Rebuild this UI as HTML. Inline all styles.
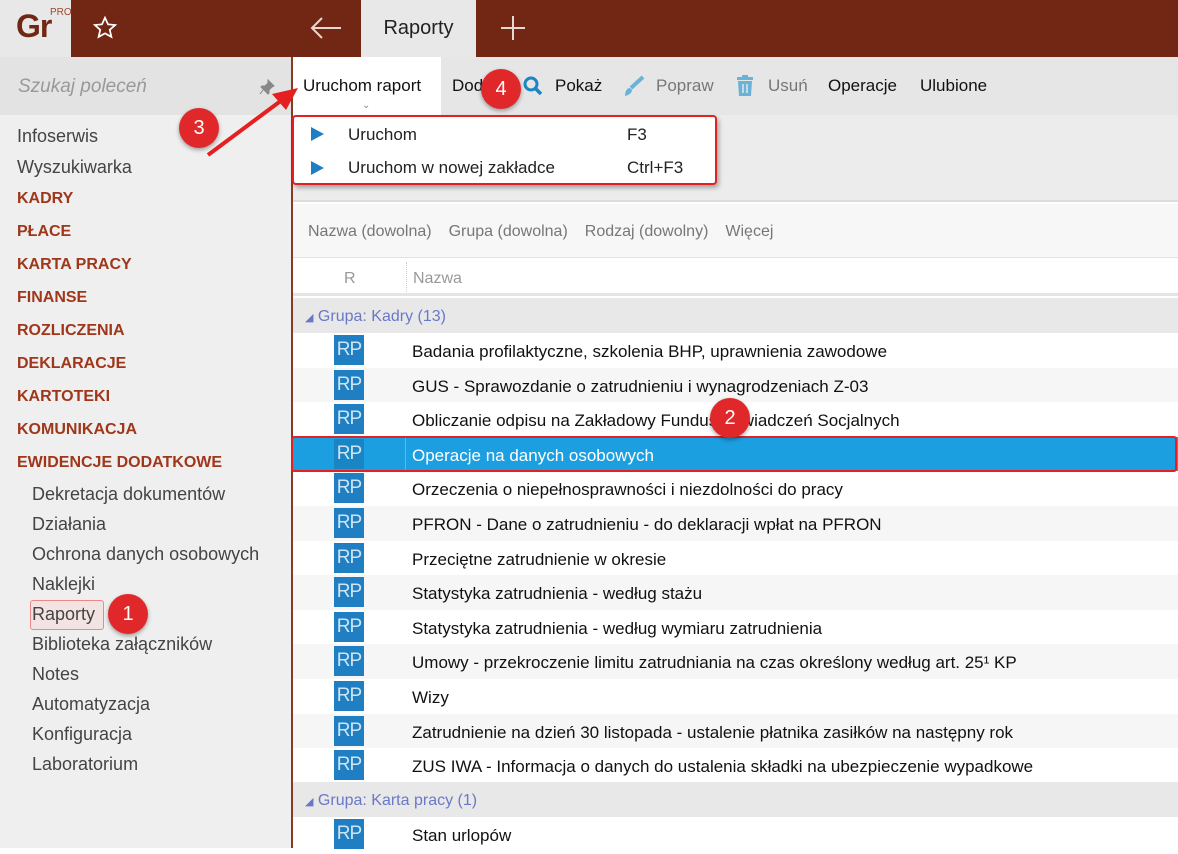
<!DOCTYPE html>
<html><head><meta charset="utf-8"><style>
*{margin:0;padding:0;box-sizing:border-box}
body{width:1178px;height:848px;overflow:hidden;font-family:"Segoe UI","Liberation Sans",sans-serif;background:#fff;position:relative;font-size:17px;color:#222}
.abs{position:absolute}
.top{left:0;top:0;width:1178px;height:57px;background:#722714}
.logo{left:0;top:0;width:71px;height:57px;background:#e8e8e8}
.tab{left:361px;top:0;width:115px;height:57px;background:#e8e8e8;font-size:20px;line-height:57px;text-align:center;color:#222}
.side{left:0;top:57px;width:291px;height:791px;background:#efefef}
.search{left:0;top:57px;width:291px;height:58px;background:#e3e3e3;color:#999;font-style:italic;font-size:19px;padding:19px 0 0 18px}
.vline{left:291px;top:57px;width:2px;height:791px;background:#8a3a22}
.si{position:absolute;font-size:18px;color:#444;white-space:nowrap}
.cap{color:#a0361a;font-weight:bold;font-size:16px;left:17px}
.sub{left:32px}
.tb{left:293px;top:57px;width:885px;height:58px;background:#e6e6e6}
.tbi{position:absolute;top:76px;font-size:17px;color:#111}
.gr{color:#777}
.area{left:293px;top:115px;width:885px;height:87px;background:#ececec;border-bottom:2px solid #dcdcdc}
.filt{left:293px;top:204px;width:885px;height:54px;background:#f7f7f7;color:#777;font-size:16px;line-height:56px;border-bottom:1px solid #e3e3e3}
.hdr{left:293px;top:258px;width:885px;height:38px;background:#fff;border-bottom:3px solid #e4e4e4;color:#999;font-size:16px}
.grp{position:absolute;left:293px;width:885px;height:35px;background:#e8e8e8;color:#6a78c8;font-size:16px;line-height:37px;padding-left:12px}
.row{position:absolute;left:293px;width:885px;height:34.6px;font-size:17px;line-height:37px;color:#111}
.rp{position:absolute;left:41px;top:2px;width:30px;height:30px;background:#1f7fc2;color:#cfe4f2;font-size:19px;line-height:30px;text-align:center;letter-spacing:-1px}
.rt{position:absolute;left:119px;top:0;white-space:nowrap}
.badge{position:absolute;width:40px;height:40px;border-radius:50%;background:#e0282a;color:#fff;font-size:20px;text-align:center;line-height:40px;box-shadow:0 2px 4px rgba(0,0,0,.35)}
</style></head><body>
<div class="abs top"></div>
<div class="abs logo"><span class="abs" style="left:16px;top:8px;font-size:32px;color:#722714;font-weight:bold;letter-spacing:-1px">Gr</span><span class="abs" style="left:50px;top:7px;font-size:10px;color:#9a4a30">PRO</span></div>
<svg class="abs" style="left:92px;top:15px" width="26" height="26" viewBox="0 0 24 24"><path d="M12 2.5l2.8 6.1 6.6.7-5 4.4 1.5 6.5L12 16.9 6.1 20.2l1.5-6.5-5-4.4 6.6-.7z" fill="none" stroke="#fff" stroke-width="1.6"/></svg>
<svg class="abs" style="left:309px;top:15px" width="34" height="26" viewBox="0 0 34 26"><path d="M32 13H3M13 3L3 13l10 10" fill="none" stroke="#e8d8d0" stroke-width="2"/></svg>
<div class="abs tab">Raporty</div>
<svg class="abs" style="left:500px;top:15px" width="26" height="26"><path d="M13 1v24M1 13h24" stroke="#e8d8d0" stroke-width="2"/></svg>

<div class="abs side"></div>
<div class="abs search">Szukaj poleceń</div>
<svg class="abs" style="left:258px;top:78px" width="18" height="18" viewBox="0 0 18 18"><path d="M10 2l6 6-2 1-3 3 0 3-1 1-7-7 1-1h3l3-3z M5 12l-3 4" fill="#888" stroke="#888"/></svg>
<div class="si" style="left:17px;top:126px">Infoserwis</div>
<div class="si" style="left:17px;top:157px">Wyszukiwarka</div>
<div class="si cap" style="top:190px">KADRY</div>
<div class="si cap" style="top:223px">PŁACE</div>
<div class="si cap" style="top:256px">KARTA PRACY</div>
<div class="si cap" style="top:289px">FINANSE</div>
<div class="si cap" style="top:322px">ROZLICZENIA</div>
<div class="si cap" style="top:355px">DEKLARACJE</div>
<div class="si cap" style="top:388px">KARTOTEKI</div>
<div class="si cap" style="top:421px">KOMUNIKACJA</div>
<div class="si cap" style="top:454px">EWIDENCJE DODATKOWE</div>
<div class="si sub" style="top:484px">Dekretacja dokumentów</div>
<div class="si sub" style="top:514px">Działania</div>
<div class="si sub" style="top:544px">Ochrona danych osobowych</div>
<div class="si sub" style="top:574px">Naklejki</div>
<div class="abs" style="left:30px;top:600px;width:74px;height:30px;border:1px solid #e88;border-radius:3px;background:#f3e3e3"></div>
<div class="si sub" style="top:604px">Raporty</div>
<div class="si sub" style="top:634px">Biblioteka załączników</div>
<div class="si sub" style="top:664px">Notes</div>
<div class="si sub" style="top:694px">Automatyzacja</div>
<div class="si sub" style="top:724px">Konfiguracja</div>
<div class="si sub" style="top:754px">Laboratorium</div>
<div class="abs vline"></div>

<div class="abs tb"></div>
<div class="abs" style="left:293px;top:57px;width:148px;height:58px;background:#fff"></div>
<div class="tbi" style="left:303px">Uruchom raport</div>
<div class="abs" style="left:362px;top:100px;font-size:10px;color:#888">⌄</div>
<div class="tbi" style="left:452px">Dodaj</div>
<svg class="abs" style="left:522px;top:75px" width="22" height="22"><circle cx="9" cy="9" r="6" fill="none" stroke="#1a86c8" stroke-width="3"/><path d="M13 13l6 6" stroke="#1a86c8" stroke-width="3.5"/></svg>
<div class="tbi" style="left:555px">Pokaż</div>
<svg class="abs" style="left:621px;top:75px" width="24" height="22"><path d="M22 2L10 13" stroke="#6ab3d8" stroke-width="4"/><path d="M9 13c-3 0-5 3-5 8 4-1 7-3 7-6z" fill="#6ab3d8"/></svg>
<div class="tbi gr" style="left:656px">Popraw</div>
<svg class="abs" style="left:736px;top:75px" width="18" height="22"><rect x="1" y="2" width="16" height="3" fill="#6ab3d8"/><rect x="6" y="0" width="6" height="3" fill="#6ab3d8"/><path d="M2 6h14l-1 15H3z" fill="#6ab3d8"/><path d="M7 9v9M11 9v9" stroke="#e6e6e6" stroke-width="1.5"/></svg>
<div class="tbi gr" style="left:768px">Usuń</div>
<div class="tbi" style="left:828px">Operacje</div>
<div class="tbi" style="left:920px">Ulubione</div>

<div class="abs area"></div>
<div class="abs" style="left:292px;top:115px;width:425px;height:70px;background:#fff;border:2px solid #e52020;border-radius:4px;box-shadow:2px 3px 5px rgba(0,0,0,.3)"></div>
<div class="abs" style="left:311px;top:127px;width:0;height:0;border-left:13px solid #1f7fc2;border-top:7px solid transparent;border-bottom:7px solid transparent"></div>
<div class="abs" style="left:311px;top:161px;width:0;height:0;border-left:13px solid #1f7fc2;border-top:7px solid transparent;border-bottom:7px solid transparent"></div>
<div class="abs" style="left:348px;top:125px">Uruchom</div>
<div class="abs" style="left:627px;top:125px">F3</div>
<div class="abs" style="left:348px;top:158px">Uruchom w nowej zakładce</div>
<div class="abs" style="left:627px;top:158px">Ctrl+F3</div>

<div class="abs filt"><span style="margin-left:15px">Nazwa (dowolna)</span><span style="margin-left:17px">Grupa (dowolna)</span><span style="margin-left:17px">Rodzaj (dowolny)</span><span style="margin-left:17px">Więcej</span></div>
<div class="abs hdr"><span class="abs" style="left:51px;top:12px">R</span><span class="abs" style="left:113px;top:4px;height:30px;border-left:1px dotted #ccc"></span><span class="abs" style="left:120px;top:12px">Nazwa</span></div>

<div class="grp" style="top:298px"><span style="font-size:11px">◢</span> Grupa: Kadry (13)</div>
<div class="abs" style="left:0;top:333px">
<div class="row" style="top:0"><div class="rp">RP</div><div class="rt">Badania profilaktyczne, szkolenia BHP, uprawnienia zawodowe</div></div>
<div class="row" style="top:34.6px;background:#f6f6f6"><div class="rp">RP</div><div class="rt">GUS - Sprawozdanie o zatrudnieniu i wynagrodzeniach Z-03</div></div>
<div class="row" style="top:69.2px"><div class="rp">RP</div><div class="rt">Obliczanie odpisu na Zakładowy Fundusz Świadczeń Socjalnych</div></div>
<div class="row" style="top:103.8px;background:#1c9fe0;color:#fff"><div class="rp" style="background:#1a85c4">RP</div><div class="abs" style="left:112px;top:0;height:34px;border-left:1px solid #5bb9ea"></div><div class="rt">Operacje na danych osobowych</div></div>
<div class="row" style="top:138.4px"><div class="rp">RP</div><div class="rt">Orzeczenia o niepełnosprawności i niezdolności do pracy</div></div>
<div class="row" style="top:173px;background:#f6f6f6"><div class="rp">RP</div><div class="rt">PFRON - Dane o zatrudnieniu - do deklaracji wpłat na PFRON</div></div>
<div class="row" style="top:207.6px"><div class="rp">RP</div><div class="rt">Przeciętne zatrudnienie w okresie</div></div>
<div class="row" style="top:242.2px;background:#f6f6f6"><div class="rp">RP</div><div class="rt">Statystyka zatrudnienia - według stażu</div></div>
<div class="row" style="top:276.8px"><div class="rp">RP</div><div class="rt">Statystyka zatrudnienia - według wymiaru zatrudnienia</div></div>
<div class="row" style="top:311.4px;background:#f6f6f6"><div class="rp">RP</div><div class="rt">Umowy - przekroczenie limitu zatrudniania na czas określony według art. 25¹ KP</div></div>
<div class="row" style="top:346px"><div class="rp">RP</div><div class="rt">Wizy</div></div>
<div class="row" style="top:380.6px;background:#f6f6f6"><div class="rp">RP</div><div class="rt">Zatrudnienie na dzień 30 listopada - ustalenie płatnika zasiłków na następny rok</div></div>
<div class="row" style="top:415.2px"><div class="rp">RP</div><div class="rt">ZUS IWA - Informacja o danych do ustalenia składki na ubezpieczenie wypadkowe</div></div>
</div>
<div class="grp" style="top:782px"><span style="font-size:11px">◢</span> Grupa: Karta pracy (1)</div>
<div class="row" style="top:817px;height:31px"><div class="rp">RP</div><div class="rt">Stan urlopów</div></div>

<div class="abs" style="left:291px;top:436px;width:886px;height:36px;border:2px solid #e52020;border-radius:3px"></div>

<svg class="abs" style="left:200px;top:80px" width="100" height="80"><path d="M8 75L86 17" stroke="#e52020" stroke-width="4"/><path d="M98 8L72 14 86 30z" fill="#e52020"/></svg>
<div class="badge" style="left:108px;top:594px">1</div>
<div class="badge" style="left:710px;top:398px">2</div>
<div class="badge" style="left:179px;top:108px">3</div>
<div class="badge" style="left:481px;top:69px">4</div>
</body></html>
